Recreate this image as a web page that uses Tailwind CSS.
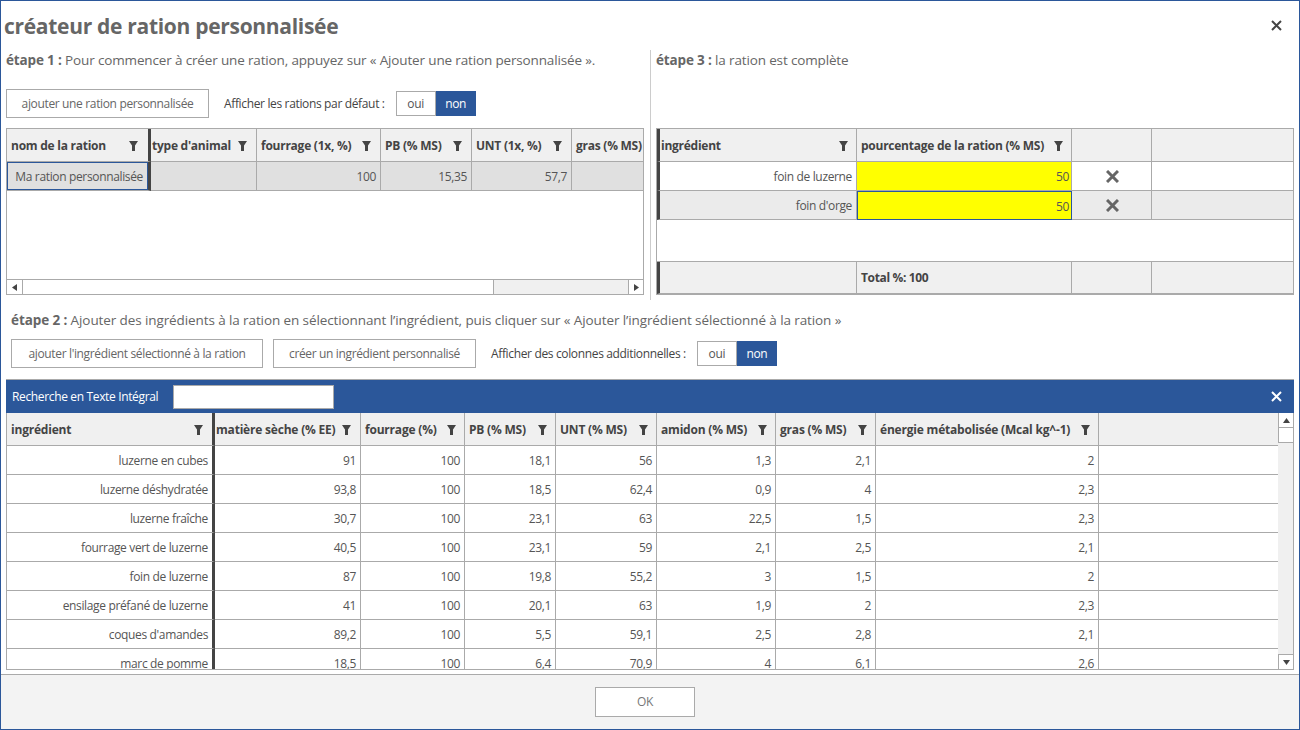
<!DOCTYPE html>
<html lang="fr">
<head>
    <meta charset="UTF-8">
    <title>créateur de ration personnalisée</title>
    <script src="https://cdn.jsdelivr.net/npm/@tailwindcss/browser@4"></script>
</head>
<body class="bg-white overflow-hidden">
    <div class="w-[1300px] h-[730px] flex flex-col border border-[#2b579a] font-['Open_Sans',sans-serif] text-[12px] tracking-[-0.35px] text-[#555]">

        <!-- titre -->
        <div class="h-[49px] shrink-0 flex items-center justify-between pl-[3px] pr-[17px]">
            <h1 class="pt-[2px] text-[21px] font-bold text-[#666] tracking-[-0.3px]">créateur de ration personnalisée</h1>
            <svg class="w-[11px] h-[11px]" viewBox="0 0 11 11"><path d="M1 1l9 9M10 1l-9 9" stroke="#444" stroke-width="2" fill="none"/></svg>
        </div>

        <!-- étapes 1 et 3 -->
        <div class="h-[250px] shrink-0 flex">
            <div class="w-[649px] shrink-0 pl-[5px]">
                <p class="h-[20px] leading-[20px] text-[13.5px] tracking-[-0.15px] text-[#666]"><b>étape 1 :</b> Pour commencer à créer une ration, appuyez sur « Ajouter une ration personnalisée ».</p>
                <div class="mt-[19px] h-[29px] flex items-center">
                    <button class="pt-[1px] w-[203px] h-[29px] border border-[#aaa] text-[#666]">ajouter une ration personnalisée</button>
                    <span class="pt-[1px] ml-[15px] text-[#444]">Afficher les rations par défaut :</span>
                    <div class="ml-[11px] flex h-[25px]">
                        <button class="w-[40px] border border-[#aaa] text-[#555]">oui</button>
                        <button class="w-[40px] bg-[#2b579a] text-white">non</button>
                    </div>
                </div>
                <div class="mt-[10px] w-[638px] h-[167px] border border-[#aaa] flex flex-col">
                    <div class="flex-1 overflow-hidden">
                        <table class="table-fixed w-[665px] border-separate border-spacing-0">
                            <colgroup><col class="w-[144px]"><col class="w-[106px]"><col class="w-[124px]"><col class="w-[91px]"><col class="w-[100px]"><col class="w-[100px]"></colgroup>
                            <thead>
                                <tr class="h-[33px] bg-[#f0f0f0] text-[#444] font-bold tracking-[-0.25px]">
                                    <th class="pt-[2px] px-[4px] border-r-[3px] border-r-[#444] border-b border-b-[#aaa] text-left"><div class="flex items-center justify-between pr-[6px]">nom de la ration <svg class="w-[9px] h-[10px]" viewBox="0 0 9 10"><path d="M0 0h9L6 4.5V10H3V4.5z" fill="#444"/></svg></div></th>
                                    <th class="pt-[2px] px-[1px] border-r border-b border-[#aaa] text-left"><div class="flex items-center justify-between pr-[8px]">type d'animal <svg class="w-[9px] h-[10px]" viewBox="0 0 9 10"><path d="M0 0h9L6 4.5V10H3V4.5z" fill="#444"/></svg></div></th>
                                    <th class="pt-[2px] px-[4px] border-r border-b border-[#aaa] text-left"><div class="flex items-center justify-between pr-[5px]">fourrage (1x, %) <svg class="w-[9px] h-[10px]" viewBox="0 0 9 10"><path d="M0 0h9L6 4.5V10H3V4.5z" fill="#444"/></svg></div></th>
                                    <th class="pt-[2px] px-[4px] border-r border-b border-[#aaa] text-left"><div class="flex items-center justify-between pr-[5px]">PB (% MS) <svg class="w-[9px] h-[10px]" viewBox="0 0 9 10"><path d="M0 0h9L6 4.5V10H3V4.5z" fill="#444"/></svg></div></th>
                                    <th class="pt-[2px] px-[4px] border-r border-b border-[#aaa] text-left"><div class="flex items-center justify-between pr-[5px]">UNT (1x, %) <svg class="w-[9px] h-[10px]" viewBox="0 0 9 10"><path d="M0 0h9L6 4.5V10H3V4.5z" fill="#444"/></svg></div></th>
                                    <th class="pt-[2px] px-[4px] border-b border-[#aaa] text-left whitespace-nowrap">gras (% MS)</th>
                                </tr>
                            </thead>
                            <tbody>
                                <tr class="h-[29px] bg-[#e0e0e0]">
                                    <td class="p-0 border-r-[3px] border-r-[#444] border-b border-b-[#aaa]"><div class="h-[28px] pt-[1px] pr-[4px] leading-[26px] text-right whitespace-nowrap border border-[#2b579a]">Ma ration personnalisée</div></td>
                                    <td class="border-r border-b border-[#aaa]"></td>
                                    <td class="pt-[2px] pr-[4px] text-right border-r border-b border-[#aaa]">100</td>
                                    <td class="pt-[2px] pr-[4px] text-right border-r border-b border-[#aaa]">15,35</td>
                                    <td class="pt-[2px] pr-[4px] text-right border-r border-b border-[#aaa]">57,7</td>
                                    <td class="border-b border-[#aaa]"></td>
                                </tr>
                            </tbody>
                        </table>
                    </div>
                    <div class="h-[15px] shrink-0 flex border-t border-[#aaa] bg-[#f0f0f0]">
                        <div class="w-[16px] border-r border-[#aaa] flex items-center justify-center bg-white"><svg class="w-[5px] h-[7px]" viewBox="0 0 5 7"><path d="M5 0v7L0 3.5z" fill="#444"/></svg></div>
                        <div class="w-[471px] border-r border-[#aaa] bg-white"></div>
                        <div class="flex-1"></div>
                        <div class="w-[15px] border-l border-[#aaa] flex items-center justify-center bg-white"><svg class="w-[5px] h-[7px]" viewBox="0 0 5 7"><path d="M0 0v7l5-3.5z" fill="#444"/></svg></div>
                    </div>
                </div>
            </div>

            <div class="flex-1 border-l border-[#ccc] pl-[5px]">
                <p class="h-[20px] leading-[20px] text-[13.5px] tracking-[-0.15px] text-[#666]"><b>étape 3 :</b> la ration est complète</p>
                <div class="mt-[58px] w-[638px] h-[167px] border border-[#aaa]">
                    <table class="table-fixed w-[636px] border-separate border-spacing-0">
                        <colgroup><col class="w-[200px]"><col class="w-[215px]"><col class="w-[80px]"><col class="w-[141px]"></colgroup>
                        <thead>
                            <tr class="h-[33px] bg-[#f0f0f0] text-[#444] font-bold tracking-[-0.25px]">
                                <th class="pt-[2px] pl-[1px] pr-[8px] border-l-[3px] border-l-[#444] border-r border-b border-r-[#aaa] border-b-[#aaa] text-left"><div class="flex items-center justify-between">ingrédient <svg class="w-[9px] h-[10px]" viewBox="0 0 9 10"><path d="M0 0h9L6 4.5V10H3V4.5z" fill="#444"/></svg></div></th>
                                <th class="pt-[2px] px-[4px] border-r border-b border-[#aaa] text-left"><div class="flex items-center justify-between pr-[4px]">pourcentage de la ration (% MS) <svg class="w-[9px] h-[10px]" viewBox="0 0 9 10"><path d="M0 0h9L6 4.5V10H3V4.5z" fill="#444"/></svg></div></th>
                                <th class="border-r border-b border-[#aaa]"></th>
                                <th class="border-b border-[#aaa]"></th>
                            </tr>
                        </thead>
                        <tbody>
                            <tr class="h-[29px]">
                                <td class="pt-[2px] pr-[4px] text-right border-l-[3px] border-l-[#444] border-r border-b border-r-[#aaa] border-b-[#aaa]">foin de luzerne</td>
                                <td class="pt-[2px] pr-[2px] text-right bg-[#ffff00] border-r border-b border-[#aaa]">50</td>
                                <td class="pl-[2px] border-r border-b border-[#aaa]"><svg class="mx-auto w-[13px] h-[13px]" viewBox="0 0 13 13"><path d="M1 1l11 11M12 1L1 12" stroke="#666" stroke-width="3" fill="none"/></svg></td>
                                <td class="border-b border-[#aaa]"></td>
                            </tr>
                            <tr class="h-[29px] bg-[#ebebeb]">
                                <td class="pt-[2px] pr-[4px] text-right border-l-[3px] border-l-[#444] border-r border-b border-r-[#aaa] border-b-[#aaa]">foin d'orge</td>
                                <td class="pt-[2px] pr-[2px] text-right bg-[#ffff00] border border-[#2b579a]">50</td>
                                <td class="pl-[2px] border-r border-b border-[#aaa]"><svg class="mx-auto w-[13px] h-[13px]" viewBox="0 0 13 13"><path d="M1 1l11 11M12 1L1 12" stroke="#666" stroke-width="3" fill="none"/></svg></td>
                                <td class="border-b border-[#aaa]"></td>
                            </tr>
                            <tr class="h-[42px]"><td colspan="4" class="border-b border-[#aaa]"></td></tr>
                            <tr class="h-[32px] bg-[#f0f0f0] text-[#444] font-bold">
                                <td class="border-l-[3px] border-l-[#444] border-r border-b border-r-[#aaa] border-b-[#aaa]"></td>
                                <td class="pt-[1px] px-[4px] border-r border-b border-[#aaa]">Total %: 100</td>
                                <td class="border-r border-b border-[#aaa]"></td>
                                <td class="border-b border-[#aaa]"></td>
                            </tr>
                        </tbody>
                    </table>
                </div>
            </div>
        </div>

        <!-- étape 2 -->
        <div class="flex-1 min-h-0 pt-[10px] flex flex-col">
            <p class="pl-[10px] h-[20px] leading-[20px] text-[13.5px] tracking-[-0.1px] text-[#666]"><b>étape 2 :</b> Ajouter des ingrédients à la ration en sélectionnant l’ingrédient, puis cliquer sur « Ajouter l’ingrédient sélectionné à la ration »</p>
            <div class="mt-[9px] pl-[10px] h-[29px] flex items-center">
                <button class="pt-[1px] w-[252px] h-[29px] border border-[#aaa] text-[#666]">ajouter l'ingrédient sélectionné à la ration</button>
                <button class="pt-[1px] ml-[10px] w-[203px] h-[29px] border border-[#aaa] text-[#666]">créer un ingrédient personnalisé</button>
                <span class="pt-[1px] ml-[15px] text-[#444]">Afficher des colonnes additionnelles :</span>
                <div class="ml-[11px] flex h-[25px]">
                    <button class="w-[40px] border border-[#aaa] text-[#555]">oui</button>
                    <button class="w-[40px] bg-[#2b579a] text-white">non</button>
                </div>
            </div>

            <div class="mt-[11px] mx-[5px] w-[1288px] h-[291px] shrink-0 flex flex-col border-t border-[#aaa]">
                <div class="h-[33px] shrink-0 bg-[#2b579a] flex items-center pl-[6px] pr-[12px] text-white">
                    <span class="w-[161px]">Recherche en Texte Intégral</span>
                    <input type="text" class="w-[161px] h-[24px] bg-white border border-[#aaa]">
                    <svg class="ml-auto w-[11px] h-[11px]" viewBox="0 0 11 11"><path d="M1 1l9 9M10 1l-9 9" stroke="#fff" stroke-width="2" fill="none"/></svg>
                </div>
                <div class="flex-1 min-h-0 flex border-l border-r border-b border-[#aaa]">
                    <div class="w-[1271px] shrink-0 overflow-hidden">
                        <table class="table-fixed w-[1271px] border-separate border-spacing-0">
                            <colgroup><col class="w-[208px]"><col class="w-[146px]"><col class="w-[104px]"><col class="w-[91px]"><col class="w-[101px]"><col class="w-[119px]"><col class="w-[100px]"><col class="w-[223px]"><col class="w-[179px]"></colgroup>
                            <thead id="grid-head"></thead>
                            <tbody id="grid-body"></tbody>
                        </table>
                    </div>
                    <div class="flex-1 flex flex-col bg-[#f0f0f0]">
                        <div class="h-[15px] bg-white border-b border-l border-[#aaa] flex items-center justify-center"><svg class="w-[7px] h-[5px]" viewBox="0 0 7 5"><path d="M0 5h7L3.5 0z" fill="#444"/></svg></div>
                        <div class="h-[15px] bg-white border-b border-l border-[#aaa]"></div>
                        <div class="flex-1"></div>
                        <div class="h-[15px] bg-white border-t border-l border-[#aaa] flex items-center justify-center"><svg class="w-[7px] h-[5px]" viewBox="0 0 7 5"><path d="M0 0h7L3.5 5z" fill="#444"/></svg></div>
                    </div>
                </div>
            </div>

            <div class="mt-[4px] flex-1 min-h-0 pr-[10px] bg-[#f3f3f3] border-t border-[#aaa] flex items-center justify-center">
                <button class="w-[100px] h-[30px] bg-white border border-[#aaa] text-[#777]">OK</button>
            </div>
        </div>
    </div>

    <script>
        const filterIcon = '<svg class="w-[9px] h-[10px] shrink-0" viewBox="0 0 9 10"><path d="M0 0h9L6 4.5V10H3V4.5z" fill="#444"/></svg>';
        const columns = ['ingrédient', "matière sèche (% EE)", 'fourrage (%)', 'PB (% MS)', 'UNT (% MS)', 'amidon (% MS)', 'gras (% MS)', 'énergie métabolisée (Mcal kg^-1)'];
        const rows = [
            ['luzerne en cubes', '91', '100', '18,1', '56', '1,3', '2,1', '2'],
            ['luzerne déshydratée', '93,8', '100', '18,5', '62,4', '0,9', '4', '2,3'],
            ['luzerne fraîche', '30,7', '100', '23,1', '63', '22,5', '1,5', '2,3'],
            ['fourrage vert de luzerne', '40,5', '100', '23,1', '59', '2,1', '2,5', '2,1'],
            ['foin de luzerne', '87', '100', '19,8', '55,2', '3', '1,5', '2'],
            ['ensilage préfané de luzerne', '41', '100', '20,1', '63', '1,9', '2', '2,3'],
            ["coques d'amandes", '89,2', '100', '5,5', '59,1', '2,5', '2,8', '2,1'],
            ['marc de pomme', '18,5', '100', '6,4', '70,9', '4', '6,1', '2,6']
        ];

        const headCells = columns.map((name, i) => {
            const cellClass = i === 0
                ? 'pt-[2px] pl-[4px] pr-[9px] border-r-[3px] border-r-[#444] border-b border-b-[#aaa] text-left'
                : i === 1
                    ? 'pt-[2px] pl-[1px] pr-[5px] border-r border-b border-[#aaa] text-left'
                    : 'pt-[2px] px-[4px] border-r border-b border-[#aaa] text-left';
            return `<th class="${cellClass}"><div class="flex items-center justify-between ${i === 0 ? '' : 'pr-[4px]'}">${name} ${filterIcon}</div></th>`;
        }).join('');
        document.getElementById('grid-head').innerHTML =
            `<tr class="h-[33px] bg-[#f0f0f0] text-[#444] font-bold tracking-[-0.2px]">${headCells}<th class="border-b border-[#aaa]"></th></tr>`;

        document.getElementById('grid-body').innerHTML = rows.map(row => {
            const cells = row.map((value, i) => {
                const cellClass = i === 0
                    ? 'pt-[2px] pr-[4px] text-right border-r-[3px] border-r-[#444] border-b border-b-[#aaa]'
                    : 'pt-[2px] pr-[4px] text-right border-r border-b border-[#aaa]';
                return `<td class="${cellClass}">${value}</td>`;
            }).join('');
            return `<tr class="h-[29px]">${cells}<td class="border-b border-[#aaa]"></td></tr>`;
        }).join('');
    </script>
</body>
</html>
